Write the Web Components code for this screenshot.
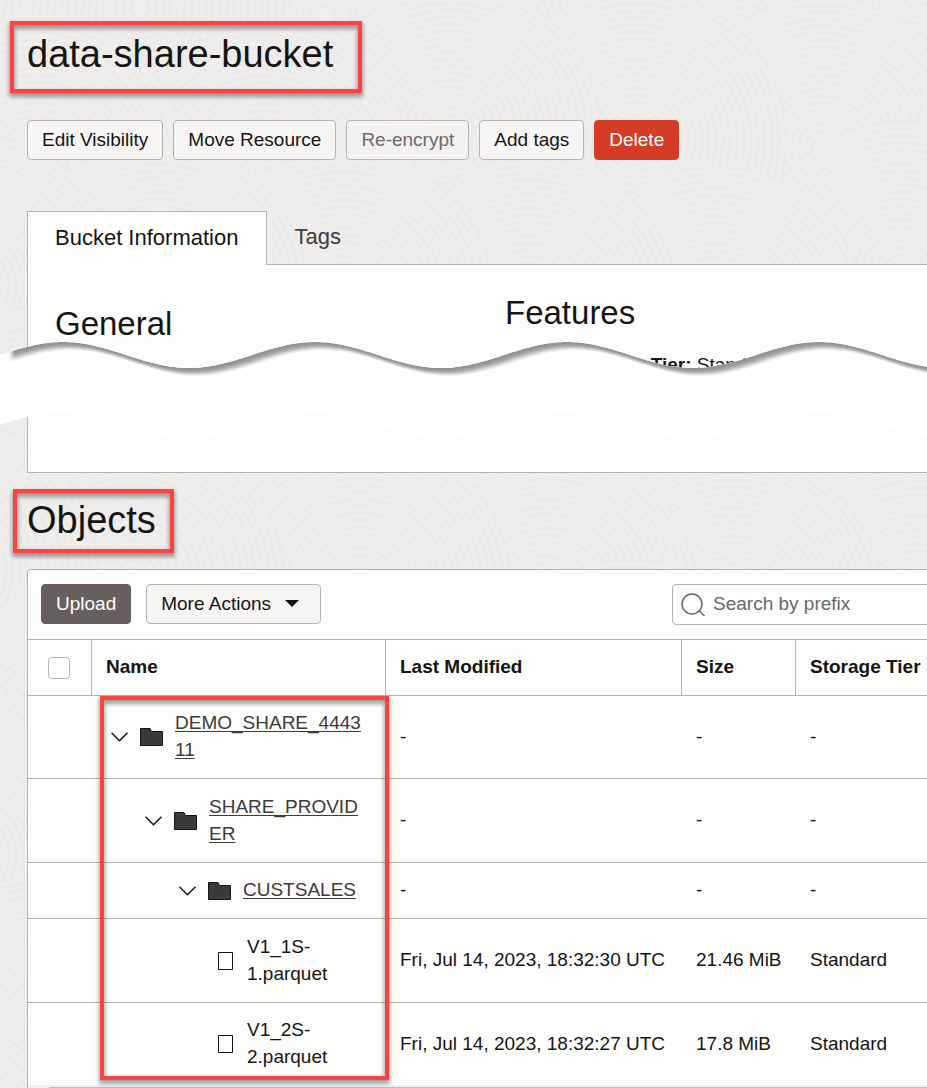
<!DOCTYPE html>
<html lang="en">
<head>
<meta charset="utf-8">
<meta name="viewport" content="width=device-width, initial-scale=1">
<title>data-share-bucket</title>
<style>
  body {
    margin: 0;
    font: 19px/27px "Liberation Sans", Arial, sans-serif;
    color: #161513;
    background: #f0efed;
    --line: #b8b3ad;
    --surface: #fdfdfb;
    --control: #f8f6f4;
    --mark: #ff4242;
  }
</style>
</head>
<body>
<bucket-page></bucket-page>

<script>
const define = (name, html, setup) => {
  const template = document.createElement('template');
  template.innerHTML = html;
  customElements.define(name, class extends HTMLElement {
    constructor() {
      super();
      this.attachShadow({ mode: 'open' }).append(template.content.cloneNode(true));
    }
    connectedCallback() { if (setup) setup(this, this.shadowRoot); }
  });
};

/* Page texture: overlapping discs of fine concentric rings. */
define('ring-backdrop', `
  <style>
    :host { position: absolute; inset: 0; overflow: hidden; z-index: -1; }
    svg { display: block; width: 100%; height: 100%; filter: blur(1px); }
    circle { fill: #f0efed; stroke: #ebeae9; stroke-width: 3; }
  </style>
  <svg aria-hidden="true"></svg>`, (host, root) => {
  const discs = [];
  for (let row = 0; row < 9; row++) {
    for (let col = 0; col < 12; col++) {
      const x = col * 190 - 60 + (row % 2) * 95 + (col * 37 + row * 53) % 41;
      const y = 1140 - row * 145 + (col * 61 + row * 29) % 53;
      discs.unshift([x, y, 150]);
    }
  }
  let html = '';
  for (const [x, y, size] of discs) {
    for (let r = size; r > 4; r -= 7) html += '<circle cx="' + x + '" cy="' + y + '" r="' + r + '"/>';
  }
  root.querySelector('svg').innerHTML = html;
});

/* Red highlight frame around whatever is slotted in. */
define('highlight-box', `
  <style>
    :host {
      display: block; box-sizing: border-box; width: fit-content;
      border: 4px solid var(--mark);
      box-shadow: 0 3px 4px 1px rgba(0,0,0,.36), inset 0 3px 4px 1px rgba(0,0,0,.36);
    }
  </style>
  <slot></slot>`);

define('action-button', `
  <style>
    :host { display: block; }
    button {
      display: flex; align-items: center; gap: 14px; height: 40px; margin: 0; padding: 0 14px 2px;
      border: 1px solid var(--line); border-radius: 4px;
      background: var(--control); color: inherit; font: inherit; white-space: nowrap;
    }
    button:disabled { color: #6d6a67; background: #f4f2f1; }
    :host([kind="danger"]) button { background: #d63b25; border-color: #d63b25; color: #fff; }
    :host([kind="primary"]) button { background: #665f5b; border-color: #665f5b; color: #fff; }
    svg { display: none; }
    :host([menu]) svg { display: block; }
    :host([menu]) button { padding-right: 21px; }
  </style>
  <button type="button"><slot></slot><svg width="14" height="7" aria-hidden="true"><path d="M0 0H14L7 7Z" fill="#161513"/></svg></button>`,
  (host, root) => {
    const b = root.querySelector('button');
    b.disabled = host.hasAttribute('disabled');
    if (host.hasAttribute('menu')) b.setAttribute('aria-haspopup', 'menu');
  });

/* White band with wavy edges that hides the middle of a long panel. */
define('wave-break', `
  <style>
    :host { display: block; height: 98px; overflow: hidden; }
    svg { display: block; width: 100%; height: 100%; }
  </style>
  <svg aria-hidden="true">
    <defs>
      <clipPath id="band"><path class="band"/></clipPath>
      <linearGradient id="fade"><stop offset=".6" stop-color="#fff"/><stop offset="1" stop-color="#fff" stop-opacity="0"/></linearGradient>
    </defs>
    <path class="band" fill="#fff"/>
    <g clip-path="url(#band)"><g class="shade"></g><rect width="15" height="60" fill="url(#fade)"/></g>
  </svg>`, (host, root) => {
  const amp = 13, half = 126, last = 63 + half * 26;
  const wave = (start, end, top) => {
    const pts = [];
    const n = Math.abs(end - start) / 3, dir = Math.sign(end - start);
    for (let i = 0; i <= n; i++) {
      const x = start + dir * i * 3;
      pts.push(x + ' ' + (top + amp - amp * Math.cos(Math.PI * (x - 63) / half)).toFixed(2));
    }
    return pts.join('L');
  };
  const edge = 'M' + wave(-18, last, 0);
  const band = edge + 'L' + wave(last, -18, 70) + 'Z';
  const upper = edge + 'L' + wave(last, -18, 20) + 'Z';
  root.querySelectorAll('.band').forEach(p => p.setAttribute('d', band));
  /* Inner shadow: copies of the upper edge, each further in and lighter. */
  let shade = '';
  [145, 149, 156, 167, 183, 203, 223, 241, 255].forEach((g, k) => {
    shade += '<path d="' + upper + '" transform="translate(' + k + ' ' + k + ')" fill="rgb(' + g + ',' + g + ',' + g + ')"/>';
  });
  root.querySelector('.shade').innerHTML = shade;
});

define('bucket-tabs', `
  <style>
    :host { display: block; position: relative; padding-left: 27px; }
    .tabs { display: flex; margin-bottom: -1px; position: relative; }
    button {
      height: 54px; margin: 0; padding: 0 27px 4px; border: 0;
      background: none; color: #3f3c39; font: inherit; font-size: 22px;
    }
    button[aria-selected="true"] { background: var(--surface); border: 1px solid var(--line); border-bottom: 0; color: #161513; padding: 0 28px 2px 27px; }
    .panel {
      box-sizing: border-box; min-height: 209px; padding: 29px 0 0 27px;
      display: grid; grid-template-columns: 450px 1fr;
      background: var(--surface); border: 1px solid var(--line); border-right: 0;
    }
    h2 { margin: 0; font-size: 33px; line-height: 38px; font-weight: 400; }
    .general { padding-top: 11px; }
    p { margin: 19px 0 0; }
    wave-break { position: absolute; left: 0; right: 0; top: 131px; }
  </style>
  <div class="tabs" role="tablist">
    <button type="button" role="tab" id="info" aria-selected="true" aria-controls="panel">Bucket Information</button>
    <button type="button" role="tab" aria-selected="false">Tags</button>
  </div>
  <div class="panel" id="panel" role="tabpanel" aria-labelledby="info">
    <section class="general"><h2>General</h2></section>
    <section><h2>Features</h2><p><b>Default Storage Tier:</b> Standard</p></section>
  </div>
  <wave-break></wave-break>`);

define('search-field', `
  <style>
    :host { display: block; }
    label {
      box-sizing: border-box; height: 41px; display: flex; align-items: center; gap: 8px; padding-left: 8px;
      border: 1px solid var(--line); border-radius: 4px; background: var(--surface);
    }
    svg { flex: none; }
    input { flex: 1; min-width: 0; height: 36px; padding: 0 0 2px; border: 0; outline: 0; background: none; font: inherit; color: inherit; }
    input::placeholder { color: #6b6865; opacity: 1; }
  </style>
  <label>
    <svg width="24" height="24" fill="none" stroke="#6b6661" stroke-width="1.5" aria-hidden="true"><circle cx="11" cy="11" r="10"/><path d="M18 17.500L23.500 23"/></svg>
    <input type="search" aria-label="Search by prefix" placeholder="Search by prefix">
  </label>`);

define('objects-table', `
  <style>
    :host { display: block; position: relative; }
    table { width: 100%; table-layout: fixed; border-collapse: separate; border-spacing: 0; }
    .check { width: 64px; } .name { width: 294px; } .date { width: 296px; } .size { width: 114px; }
    th, td { box-sizing: border-box; padding: 0 14px; text-align: left; border-bottom: 1px solid var(--line); white-space: nowrap; }
    th { height: 56px; padding-bottom: 2px; border-right: 1px solid var(--line); }
    th:first-child { padding: 0; }
    td { height: 56px; padding: 13px 0 15px 14px; }
    tbody tr:nth-child(even) { height: 84px; }
    tbody tr:last-child td { border-bottom: 0; }
    td.path { white-space: normal; overflow-wrap: anywhere; padding: 13px 22px 13px 14px; }
    .node { display: flex; align-items: center; gap: 12px; padding-left: calc(5px + var(--level) * 34px); }
    .node svg { flex: none; display: block; }
    .label { padding-bottom: 2px; }
    a { color: #3d3a37; text-decoration: underline 1px; text-decoration-skip-ink: none; text-underline-offset: 2px; }
    .toggle { padding: 0; border: 0; background: none; }
    input { appearance: none; display: block; width: 22px; height: 22px; margin: 0 auto 0 20px; border: 1px solid var(--line); border-radius: 4px; background: #fff; }
    highlight-box { position: absolute; left: 72px; width: 289px; top: 56px; bottom: 5px; pointer-events: none; }
  </style>
  <table>
    <colgroup><col class="check"><col class="name"><col class="date"><col class="size"><col></colgroup>
    <thead><tr>
      <th scope="col"><input type="checkbox" aria-label="Select all objects"></th>
      <th scope="col">Name</th><th scope="col">Last Modified</th><th scope="col">Size</th><th scope="col">Storage Tier</th>
    </tr></thead>
    <tbody></tbody>
  </table>
  <highlight-box></highlight-box>`, (host, root) => {
  const rows = [
    [0, 'DEMO_SHARE_444311'],
    [1, 'SHARE_PROVIDER'],
    [2, 'CUSTSALES'],
    [3, 'V1_1S-1.parquet', 'Fri, Jul 14, 2023, 18:32:30 UTC', '21.46 MiB', 'Standard'],
    [3, 'V1_2S-2.parquet', 'Fri, Jul 14, 2023, 18:32:27 UTC', '17.8 MiB', 'Standard'],
  ];
  const chevron = '<button class="toggle" type="button" aria-expanded="true" aria-label="Collapse folder"><svg width="17" height="10" fill="none" stroke="#161513" stroke-width="1.500"><path d="M.5 .8L8.500 8.800L16.500 .8"/></svg></button>';
  const folder = '<svg width="23" height="18" aria-hidden="true"><path d="M.5 .5H10L11.500 3.500H22.500V17.500H.5Z" fill="#3c3a38" stroke="#161513"/></svg>';
  const file = '<svg width="22" height="18" aria-hidden="true"><path d="M5.500 .5H19.500V17.500H5.500Z" fill="#fff" stroke="#161513"/></svg>';
  root.querySelector('tbody').innerHTML = rows.map(([level, name, ...cells]) => {
    const isFile = cells.length > 0;
    const label = isFile ? '<span class="label">' + name + '</span>' : '<a class="label" href="#' + name + '">' + name + '</a>';
    const rest = isFile ? cells.map(c => '<td>' + c + '</td>').join('') : '<td>-</td>'.repeat(3);
    return '<tr><td></td><td class="path"><div class="node" style="--level:' + level + '">' +
      (isFile ? file : chevron + folder) + label + '</div></td>' + rest + '</tr>';
  }).join('');
});

define('objects-card', `
  <style>
    :host { display: block; margin-left: 27px; width: calc(100% + 13px); border: 1px solid var(--line); border-bottom: 0; border-radius: 4px 4px 0 0; box-sizing: border-box; background: var(--surface); }
    .toolbar { display: flex; gap: 15px; box-sizing: border-box; height: 70px; padding: 14px 14px 14px 13px; border-bottom: 1px solid var(--line); }
    search-field { margin-left: auto; width: 280px; }
    .scroll { height: 3px; box-sizing: border-box; background: #f1f1f1; padding: 2px 0 0 21px; }
    .thumb { height: 1px; background: #bdbdbd; }
  </style>
  <div class="toolbar">
    <action-button kind="primary">Upload</action-button>
    <action-button menu>More Actions</action-button>
    <search-field></search-field>
  </div>
  <objects-table></objects-table>
  <div class="scroll"><div class="thumb"></div></div>`);

define('bucket-page', `
  <style>
    :host { display: block; position: relative; box-sizing: border-box; min-height: 100vh; overflow: hidden; padding-top: 21px; z-index: 0; }
    h1 { margin: 0; font-size: 38px; line-height: 44px; font-weight: 400; }
    .title { margin-left: 10px; }
    .title h1 { padding: 7px 25px 13px 13px; }
    .actions { display: flex; flex-wrap: wrap; gap: 10px; padding-left: 27px; margin: 27px 0 51px; }
    .objects { margin: 16px 0 16px 13px; }
    .objects h1 { padding: 5px 14px 7px 10px; }
  </style>
  <ring-backdrop></ring-backdrop>
  <highlight-box class="title"><h1>data-share-bucket</h1></highlight-box>
  <div class="actions">
    <action-button>Edit Visibility</action-button>
    <action-button>Move Resource</action-button>
    <action-button disabled>Re-encrypt</action-button>
    <action-button>Add tags</action-button>
    <action-button kind="danger">Delete</action-button>
  </div>
  <bucket-tabs></bucket-tabs>
  <highlight-box class="objects"><h1>Objects</h1></highlight-box>
  <objects-card></objects-card>`);
</script>
</body>
</html>
